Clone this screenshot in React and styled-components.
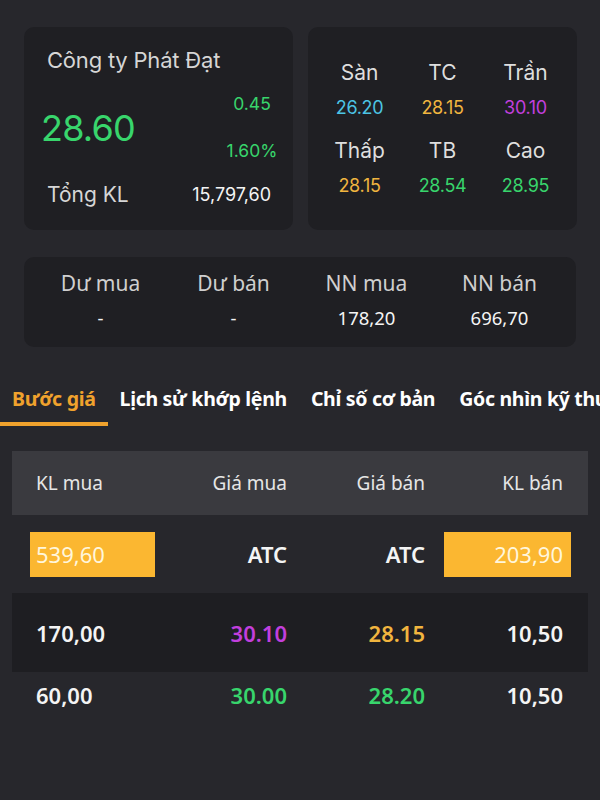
import React from "react";
import styled, { createGlobalStyle } from "styled-components";

const GlobalStyle = createGlobalStyle`
  * { box-sizing: border-box; }
  body {
    margin: 0;
    background: #27272c;
    font-family: "Noto Sans", "Open Sans", sans-serif;
  }
`;

const COLORS = {
  green: "#38d56c",
  cyan: "#4cc4e4",
  yellow: "#f1b53f",
  purple: "#c23fdd",
  white: "#f4f4f4",
};

const stats = [
  { label: "Sàn", value: "26.20", color: "cyan" },
  { label: "TC", value: "28.15", color: "yellow" },
  { label: "Trần", value: "30.10", color: "purple" },
  { label: "Thấp", value: "28.15", color: "yellow" },
  { label: "TB", value: "28.54", color: "green" },
  { label: "Cao", value: "28.95", color: "green" },
];

const foreign = [
  { label: "Dư mua", value: "-" },
  { label: "Dư bán", value: "-" },
  { label: "NN mua", value: "178,20" },
  { label: "NN bán", value: "696,70" },
];

const tabs = ["Bước giá", "Lịch sử khớp lệnh", "Chỉ số cơ bản", "Góc nhìn kỹ thuật"];

const rows = [
  { kl1: "170,00", p1: "30.10", c1: "purple", p2: "28.15", c2: "yellow", kl2: "10,50", shaded: true },
  { kl1: "60,00", p1: "30.00", c1: "green", p2: "28.20", c2: "green", kl2: "10,50" },
];

export default function App() {
  return (
    <Page>
      <GlobalStyle />
      <TopRow>
        <Card className="summary">
          <h2 className="summary_name">Công ty Phát Đạt</h2>
          <div className="summary_price">
            <span className="summary_big">28.60</span>
            <div className="summary_change">
              <span>0.45</span>
              <span>1.60%</span>
            </div>
          </div>
          <div className="summary_total">
            <span>Tổng KL</span>
            <span className="summary_vol">15,797,60</span>
          </div>
        </Card>
        <Card>
          <StatGrid>
            {stats.map((s) => (
              <Stat key={s.label}>
                <span className="stat_label">{s.label}</span>
                <StatValue $color={COLORS[s.color]}>{s.value}</StatValue>
              </Stat>
            ))}
          </StatGrid>
        </Card>
      </TopRow>

      <ForeignCard>
        {foreign.map((f) => (
          <Stat key={f.label} className="foreign">
            <span className="foreign_label">{f.label}</span>
            <span className="foreign_value">{f.value}</span>
          </Stat>
        ))}
      </ForeignCard>

      <TabBar>
        {tabs.map((t, i) => (
          <Tab key={t} $active={i === 0}>
            {t}
          </Tab>
        ))}
      </TabBar>

      <Table>
        <HeadRow>
          <span>KL mua</span>
          <span className="r">Giá mua</span>
          <span className="r">Giá bán</span>
          <span className="r">KL bán</span>
        </HeadRow>
        <AtcRow>
          <VolBox $side="left">539,60</VolBox>
          <Cell $color={COLORS.white}>ATC</Cell>
          <Cell $color={COLORS.white}>ATC</Cell>
          <VolBox $side="right">203,90</VolBox>
        </AtcRow>
        {rows.map((r, i) => (
          <DataRow key={i} $shaded={r.shaded}>
            <Cell $left $color={COLORS.white}>{r.kl1}</Cell>
            <Cell $color={COLORS[r.c1]}>{r.p1}</Cell>
            <Cell $color={COLORS[r.c2]}>{r.p2}</Cell>
            <Cell $color={COLORS.white}>{r.kl2}</Cell>
          </DataRow>
        ))}
      </Table>
    </Page>
  );
}

const Page = styled.div`
  width: 600px;
  min-height: 800px;
  overflow: hidden;
  background: #27272c;
  padding-top: 27px;
`;

const TopRow = styled.div`
  display: flex;
  gap: 15px;
  padding: 0 23px 0 24px;
`;

const Card = styled.div`
  width: 269px;
  height: 203px;
  border-radius: 10px;
  background: #1f1f23;
  font-family: Inter, "Noto Sans", sans-serif;

  &.summary {
    padding: 20px 14px 0 23px;
    color: #d6d6d6;
  }
  .summary_name {
    margin: 0;
    font-size: 22px;
    font-weight: 400;
    line-height: 26px;
    letter-spacing: -0.2px;
  }
  .summary_price {
    display: flex;
    align-items: center;
    justify-content: space-between;
    margin-top: 16px;
    height: 76px;
  }
  .summary_big {
    font-size: 36px;
    letter-spacing: -0.8px;
    color: ${COLORS.green};
    margin-left: -6px;
    padding-top: 2px;
  }
  .summary_change {
    display: flex;
    flex-direction: column;
    align-items: center;
    gap: 26px;
    width: 60px;
    margin-right: -3px;
    font-size: 17.5px;
    line-height: 21px;
    color: ${COLORS.green};
  }
  .summary_total {
    display: flex;
    justify-content: space-between;
    align-items: center;
    margin-top: 17px;
    padding-right: 8px;
    font-size: 21px;
    line-height: 26px;
  }
  .summary_vol {
    font-size: 18px;
    color: ${COLORS.white};
  }
`;

const StatGrid = styled.div`
  display: grid;
  grid-template-columns: repeat(3, 83px);
  justify-content: center;
  row-gap: 18px;
  padding-top: 32px;
`;

const Stat = styled.div`
  display: flex;
  flex-direction: column;
  align-items: center;

  .stat_label {
    font-size: 21px;
    line-height: 28px;
    color: #dedede;
  }

  &.foreign {
    gap: 10px;
  }
  .foreign_label {
    font-size: 21px;
    line-height: 26px;
    color: #cfcfcf;
  }
  .foreign_value {
    font-size: 18.5px;
    line-height: 24px;
    color: ${COLORS.white};
  }
`;

const StatValue = styled.span`
  margin-top: 10px;
  font-size: 18px;
  line-height: 22px;
  letter-spacing: -0.3px;
  color: ${(p) => p.$color};
`;

const ForeignCard = styled.div`
  display: grid;
  grid-template-columns: repeat(4, 133px);
  justify-content: center;
  margin: 27px 24px 0;
  height: 90px;
  padding-top: 13px;
  border-radius: 10px;
  background: #1f1f23;
`;

const TabBar = styled.div`
  display: flex;
  margin-top: 28px;
  white-space: nowrap;
`;

const Tab = styled.div`
  padding: 11px 12px 10px;
  font-size: 19.5px;
  line-height: 26px;
  font-weight: 700;
  letter-spacing: -0.3px;
  color: ${(p) => (p.$active ? "#f0a22d" : "#ffffff")};
  border-bottom: 4px solid ${(p) => (p.$active ? "#f0a22d" : "transparent")};
`;

const Table = styled.div`
  margin: 25px 12px 0;
`;

const rowGrid = `
  display: grid;
  grid-template-columns: 125px 126px 138px 138px;
  align-items: center;
  padding: 0 25px 0 24px;
`;

const HeadRow = styled.div`
  ${rowGrid}
  height: 64px;
  background: #3a3a3f;
  font-size: 19px;
  color: #e6e6e6;

  .r {
    text-align: right;
  }
`;

const AtcRow = styled.div`
  ${rowGrid}
  height: 78px;
`;

const DataRow = styled.div`
  ${rowGrid}
  height: ${(p) => (p.$shaded ? "79px" : "46px")};
  background: ${(p) => (p.$shaded ? "#1e1e22" : "transparent")};
`;

const Cell = styled.span`
  font-size: 22px;
  font-weight: 600;
  text-align: ${(p) => (p.$left ? "left" : "right")};
  color: ${(p) => p.$color};
`;

const VolBox = styled.span`
  display: flex;
  align-items: center;
  justify-content: ${(p) => (p.$side === "left" ? "flex-start" : "flex-end")};
  justify-self: ${(p) => (p.$side === "left" ? "start" : "end")};
  width: ${(p) => (p.$side === "left" ? "125px" : "127px")};
  height: 45px;
  margin: ${(p) => (p.$side === "left" ? "0 0 0 -6px" : "0 -8px 0 0")};
  padding: ${(p) => (p.$side === "left" ? "0 0 0 6px" : "0 8px 0 0")};
  background: #fbb731;
  font-size: 22px;
  color: #fff6dc;
`;
